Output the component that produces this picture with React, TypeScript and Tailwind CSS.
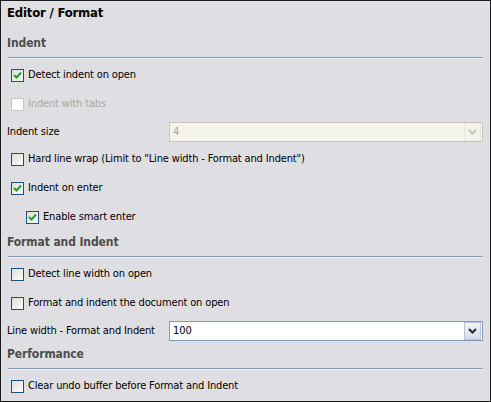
import React from 'react';

const font = { fontFamily: '"DejaVu Sans Condensed", "DejaVu Sans", sans-serif' };

function Check({ checked, disabled }: { checked?: boolean; disabled?: boolean }) {
  return (
    <div
      className={`w-[13px] h-[13px] shrink-0 border flex items-center justify-center ${
        disabled
          ? 'border-[#cac8bb] bg-white'
          : 'border-[#1c5180] bg-gradient-to-br from-[#dcdcd7] to-white'
      }`}
    >
      {checked && (
        <svg width="9" height="9" viewBox="0 0 9 9">
          <path d="M1 4 L3.5 6.5 L8 1.5" fill="none" stroke="#21a121" strokeWidth="2" />
        </svg>
      )}
    </div>
  );
}

function CheckRow({
  label,
  checked,
  disabled,
  indent,
}: {
  label: string;
  checked?: boolean;
  disabled?: boolean;
  indent?: boolean;
}) {
  return (
    <div className={`h-[29px] flex items-center gap-[4px] ${indent ? 'pl-[25px]' : 'pl-[10px]'}`}>
      <Check checked={checked} disabled={disabled} />
      <span className={`text-[11px] tracking-[-0.15px] ${disabled ? 'text-[#aca899]' : 'text-black'}`}>{label}</span>
    </div>
  );
}

function Heading({ children }: { children: React.ReactNode }) {
  return (
    <>
      <div className="h-[20px] flex items-center pl-[6px] text-[12px] font-bold tracking-[-0.1px] text-[#4d4d4d]">{children}</div>
      <div className="ml-[7px] mr-[7px] h-[2px] border-t border-[#86a0bf] border-b border-b-[#edf1f6] mt-[4px]" />
    </>
  );
}

function Chevron({ color }: { color: string }) {
  return (
    <svg width="9" height="6" viewBox="0 0 9 6">
      <path d="M1 1 L4.5 4.5 L8 1" fill="none" stroke={color} strokeWidth="2" />
    </svg>
  );
}

export default function App() {
  return (
    <div className="w-[491px] h-[402px] bg-[#dfdfe3] border border-[#1b1b1b] flex flex-col" style={font}>
      <div className="h-[23px] flex items-center pl-[6px] text-[13px] font-bold tracking-[-0.2px] text-black">Editor / Format</div>

      <div className="mt-[9px]">
        <Heading>Indent</Heading>
      </div>
      <div className="mt-[2px]">
        <CheckRow label="Detect indent on open" checked />
        <CheckRow label="Indent with tabs" disabled />
      </div>
      <div className="h-[26px] flex items-center pl-[6px] pr-[7px]">
        <span className="w-[162px] text-[11px] tracking-[-0.15px] text-black">Indent size</span>
        <div className="flex-1 h-[20px] border border-[#c9c7ba] bg-[#f4f3ec] flex items-center justify-between">
          <span className="pl-[3px] text-[11px] text-[#aca899]">4</span>
          <div className="w-[17px] h-[18px] mr-px border border-[#e8e6dc] bg-[#f3f2ec] flex items-center justify-center">
            <Chevron color="#c9c7ba" />
          </div>
        </div>
      </div>
      <CheckRow label={'Hard line wrap (Limit to "Line width - Format and Indent")'} />
      <CheckRow label="Indent on enter" checked />
      <CheckRow label="Enable smart enter" checked indent />

      <Heading>Format and Indent</Heading>
      <div className="mt-[2px]">
        <CheckRow label="Detect line width on open" />
        <CheckRow label="Format and indent the document on open" />
      </div>
      <div className="h-[26px] flex items-center pl-[6px] pr-[7px]">
        <span className="w-[162px] text-[11px] tracking-[-0.15px] text-black">Line width - Format and Indent</span>
        <div className="flex-1 h-[20px] border border-[#7f9db9] bg-white flex items-center justify-between">
          <span className="pl-[3px] text-[11px] text-black">100</span>
          <div className="w-[17px] h-[18px] mr-px border border-[#b9c5dd] bg-gradient-to-b from-[#f3f4f8] to-[#d6dbe8] flex items-center justify-center">
            <Chevron color="#2b2b2b" />
          </div>
        </div>
      </div>

      <Heading>Performance</Heading>
      <div className="mt-[2px]">
        <CheckRow label="Clear undo buffer before Format and Indent" />
      </div>
    </div>
  );
}
